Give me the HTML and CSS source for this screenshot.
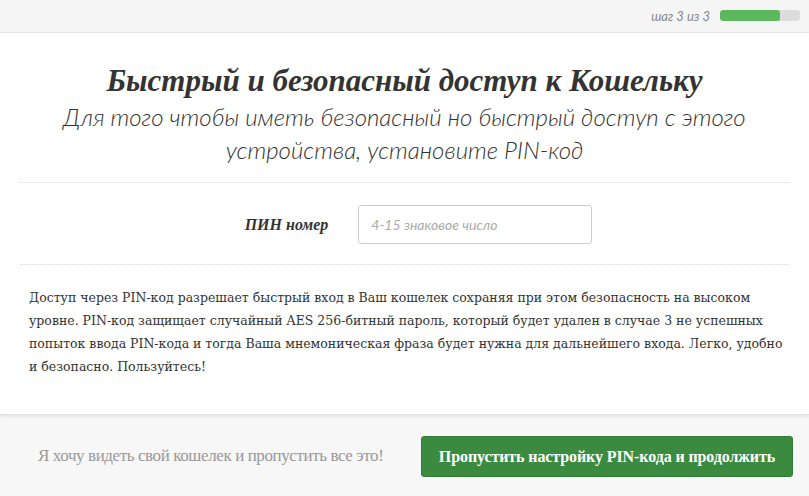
FILE: index.html
```html
<!DOCTYPE html>
<html lang="ru">
<head>
    <meta charset="UTF-8">
    <meta name="viewport" content="width=device-width, initial-scale=1.0">
    <title>PIN-код</title>
    <link rel="stylesheet" href="styles.css">
</head>
<body>

<div class="topbar">
    <span class="step">шаг 3 из 3</span>
    <div class="progress"><div class="progress-fill" style="width: 75%"></div></div>
</div>

<div class="content">
    <div class="heading">
        <h1>Быстрый и безопасный доступ к Кошельку</h1>
        <h2>Для того чтобы иметь безопасный но быстрый доступ с этого устройства, установите PIN-код</h2>
    </div>

    <div class="pin-row">
        <label class="pin-label" for="pin">ПИН номер</label>
        <input type="password" id="pin" class="pin-input" placeholder="4-15 знаковое число">
    </div>

    <p class="info">Доступ через PIN-код разрешает быстрый вход в Ваш кошелек сохраняя при этом безопасность на высоком уровне. PIN-код защищает случайный AES 256-битный пароль, который будет удален в случае 3 не успешных попыток ввода PIN-кода и тогда Ваша мнемоническая фраза будет нужна для дальнейшего входа. Легко, удобно и безопасно. Пользуйтесь!</p>
</div>

<div class="footer">
    <a class="skip" href="#">Я хочу видеть свой кошелек и пропустить все это!</a>
    <button class="btn">Пропустить настройку PIN-кода и продолжить</button>
</div>

</body>
</html>
```

FILE: styles.css
```css
body {
    margin: 0;
    padding: 0;
    background-color: #f7f7f7;
    font-family: "Liberation Serif", serif;
    color: #333;
    height: 496px;
    display: flex;
    flex-direction: column;
}
.topbar {
    height: 32px;
    background-color: #f5f5f5;
    border-bottom: 1px solid #e6e6e6;
    display: flex;
    align-items: center;
    justify-content: flex-end;
    padding-right: 9px;
    gap: 10px;
}
.step {
    font-family: "Lato", sans-serif;
    font-style: italic;
    font-size: 13px;
    color: #888;
    padding-bottom: 1px;
}
.progress {
    width: 80px;
    height: 11px;
    border-radius: 3px;
    background-color: #dcdcdc;
    overflow: hidden;
    margin-bottom: 1px;
}
.progress-fill {
    height: 100%;
    background-color: #5cb85c;
    border-radius: 3px;
}
.content {
    background-color: #fff;
    padding: 0 20px;
    height: 381px;
    box-shadow: 0 2px 3px rgba(0, 0, 0, 0.08);
    border-bottom: 1px solid #e3e3e3;
}
.heading {
    text-align: center;
    padding: 29px 0 16px;
    border-bottom: 1px dotted #d8d8d8;
}
h1 {
    margin: 0;
    font-family: "Liberation Serif", serif;
    font-style: italic;
    font-weight: bold;
    font-size: 31px;
    line-height: 38px;
    color: #333;
}
h2 {
    margin: 0 auto;
    width: 720px;
    font-family: "Lato", sans-serif;
    font-style: italic;
    font-weight: 300;
    font-size: 24px;
    line-height: 33px;
    color: #333;
}
.pin-row {
    display: flex;
    align-items: center;
    justify-content: center;
    gap: 30px;
    padding: 22px 0 20px;
    border-bottom: 1px dotted #d8d8d8;
}
.pin-label {
    font-style: italic;
    font-weight: bold;
    font-size: 16px;
    color: #333;
    margin-left: 28px;
}
.pin-input {
    width: 234px;
    height: 39px;
    box-sizing: border-box;
    border: 1px solid #ccc;
    border-radius: 3px;
    padding: 0 12px;
    font-family: "Lato", sans-serif;
    font-style: italic;
    font-size: 14px;
}
.pin-input::placeholder {
    color: #aaa;
}
.info {
    margin: 21px 0 0 9px;
    font-family: "DejaVu Serif", serif;
    font-size: 12.5px;
    line-height: 23px;
    color: #333;
}
.footer {
    flex: 1;
    display: flex;
    align-items: center;
    justify-content: space-between;
    padding: 0 16px 0 38px;
}
.skip {
    font-size: 17px;
    color: #999;
    text-decoration: none;
    letter-spacing: -0.4px;
}
.btn {
    background-color: #3a8b40;
    color: #fff;
    border: 1px solid #327a37;
    border-radius: 3px;
    font-family: "Liberation Serif", serif;
    font-weight: bold;
    font-size: 16px;
    letter-spacing: -0.1px;
    width: 372px;
    height: 41px;
    cursor: pointer;
    margin-top: 2px;
}
```
